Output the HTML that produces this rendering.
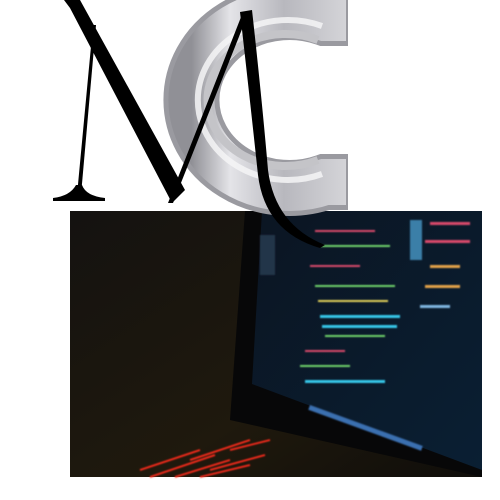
<!DOCTYPE html>
<html><head><meta charset="utf-8"><style>
html,body{margin:0;padding:0;background:#fff;width:500px;height:500px;overflow:hidden}
</style></head><body>
<svg width="500" height="500" viewBox="0 0 500 500" xmlns="http://www.w3.org/2000/svg" style="position:absolute;left:0;top:0">
<defs>
<linearGradient id="bg" x1="0" y1="0" x2="1" y2="1">
<stop offset="0" stop-color="#141210"/><stop offset="0.6" stop-color="#1f190d"/><stop offset="1" stop-color="#0f0d0a"/>
</linearGradient>
<linearGradient id="scr" x1="0" y1="0" x2="1" y2="1">
<stop offset="0" stop-color="#0b1522"/><stop offset="1" stop-color="#0a1f33"/>
</linearGradient>
<linearGradient id="cg" x1="0" y1="0" x2="1" y2="0">
<stop offset="0" stop-color="#909096"/><stop offset="0.25" stop-color="#e4e4e8"/><stop offset="0.6" stop-color="#b8b8be"/><stop offset="1" stop-color="#d4d4d8"/>
</linearGradient>
<filter id="bl"><feGaussianBlur stdDeviation="0.8"/></filter>
</defs>
<rect x="70" y="211" width="412" height="266" fill="url(#bg)"/>
<polygon points="245,211 482,211 482,477 230,420" fill="#070708"/>
<polygon points="262,211 482,211 482,470 252,384" fill="url(#scr)"/>
<g filter="url(#bl)">
<rect x="315" y="230" width="60" height="2" fill="#d94a6b"/>
<rect x="320" y="245" width="70" height="2" fill="#6fd36b"/>
<rect x="310" y="265" width="50" height="2" fill="#d94a6b"/>
<rect x="315" y="285" width="80" height="2" fill="#6fd36b"/>
<rect x="318" y="300" width="70" height="2" fill="#e2d25a"/>
<rect x="320" y="315" width="80" height="3" fill="#35c6e8"/>
<rect x="322" y="325" width="75" height="3" fill="#35c6e8"/>
<rect x="325" y="335" width="60" height="2" fill="#6fd36b"/>
<rect x="305" y="350" width="40" height="2" fill="#d94a6b"/>
<rect x="300" y="365" width="50" height="2" fill="#6fd36b"/>
<rect x="305" y="380" width="80" height="3" fill="#35c6e8"/>
<rect x="430" y="222" width="40" height="3" fill="#d94a6b"/>
<rect x="425" y="240" width="45" height="3" fill="#d94a6b"/>
<rect x="430" y="265" width="30" height="3" fill="#e2a24a"/>
<rect x="425" y="285" width="35" height="3" fill="#e2a24a"/>
<rect x="420" y="305" width="30" height="3" fill="#7fb5e0"/>
<rect x="410" y="220" width="12" height="40" fill="#3a7fa8"/>
<rect x="310" y="405" width="120" height="5" fill="#3a6fb0" transform="rotate(20 310 405)"/>
<rect x="260" y="235" width="15" height="40" fill="#22344a"/>
</g>
<g filter="url(#bl)" stroke="#ff2a1a" stroke-width="1.8" fill="none">
<path d="M140,470 L200,450 M150,477 L215,455 M175,477 L230,460 M200,477 L250,465 M190,460 L250,440 M210,470 L265,455 M230,450 L270,440"/>
</g>
<path d="M348,18 L325,18 A98,88 0 1 0 325,182 L348,182" fill="none" stroke="#9a9aa0" stroke-width="56"/>
<path d="M346,18 L325,18 A98,88 0 1 0 325,182 L346,182" fill="none" stroke="url(#cg)" stroke-width="46"/>
<path d="M322,26 A90,80 0 1 0 322,174" fill="none" stroke="#f4f4f6" stroke-width="6" opacity="0.85"/>
<path d="M318,40 A78,66 0 1 0 318,160" fill="none" stroke="#c4c4c8" stroke-width="8"/>
<g fill="#000">
<path d="M64,0 L80,0 L185,190 L172,203 L70,8 Z"/>
<path d="M93,25 L96,25 L81,195 L77,195 Z"/>
<path d="M53,198 Q70,196 76,185 L82,185 Q86,196 105,198 L105,201 L53,201 Z"/>
<path d="M168,203 L243,12 L248,14 L173,203 Z"/>
<path d="M240,12 L252,10 Q262,100 268,170 Q275,225 325,245 L320,248 Q265,232 258,175 Q250,100 240,12 Z"/>
</g>
</svg>
</body></html>
